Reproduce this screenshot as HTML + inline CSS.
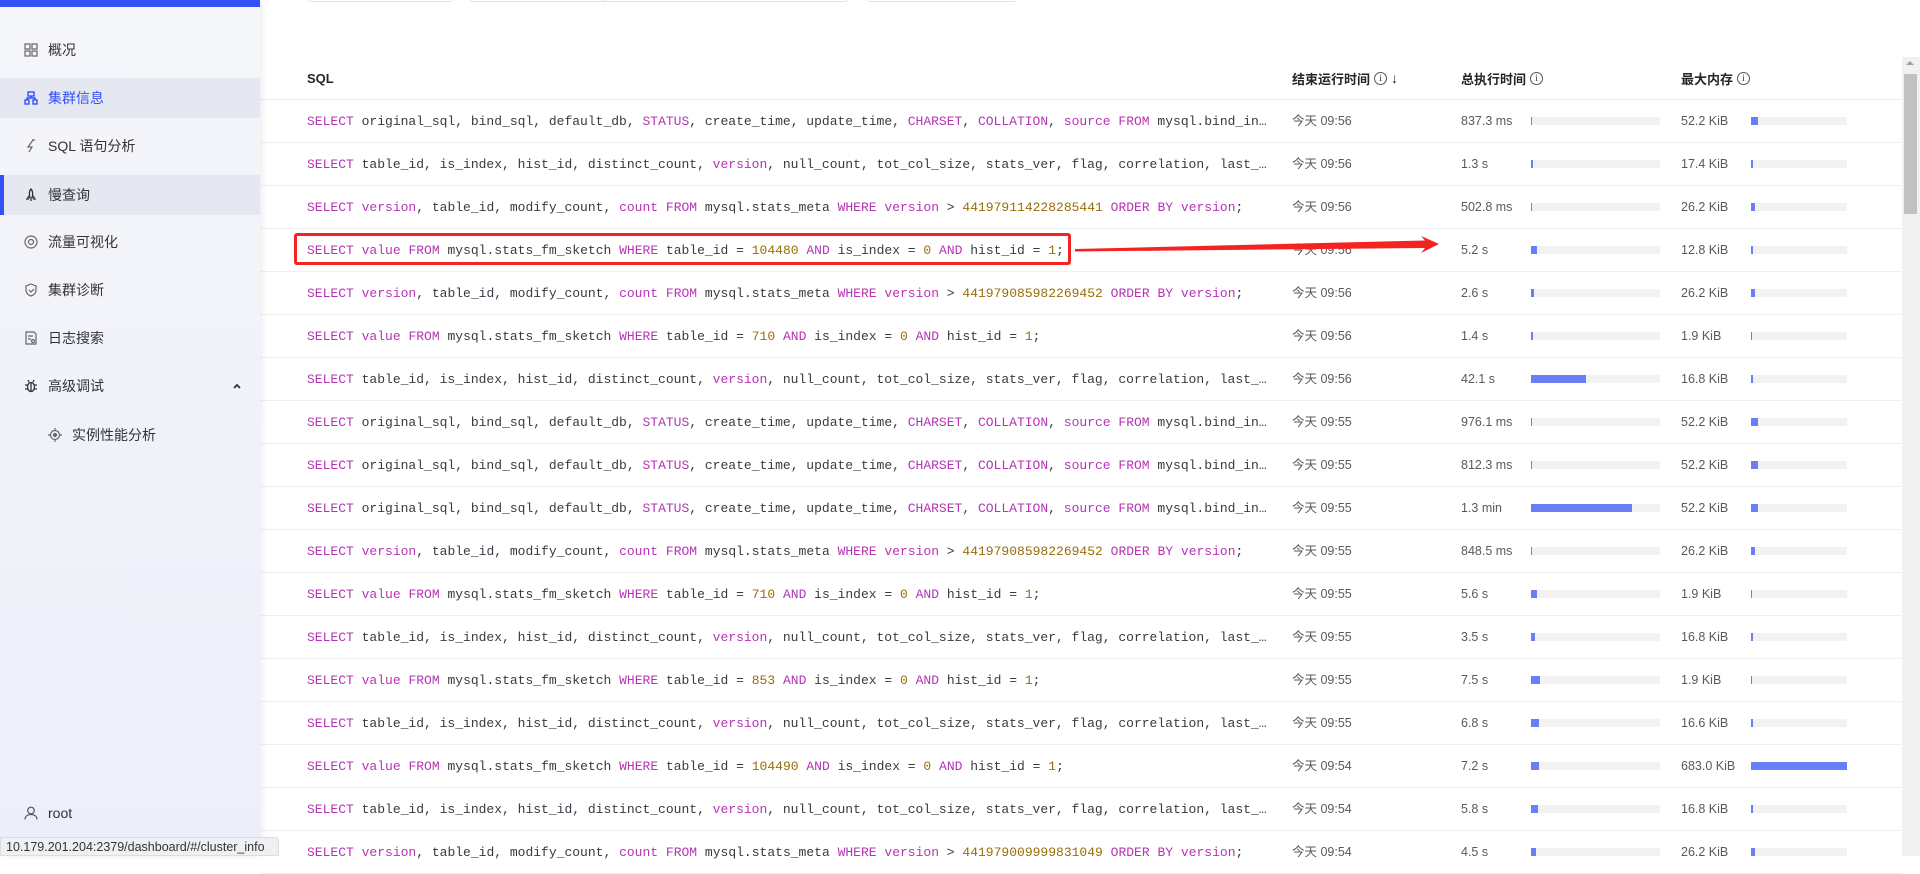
<!DOCTYPE html>
<html><head><meta charset="utf-8">
<style>
*{margin:0;padding:0;box-sizing:border-box}
body{width:1920px;height:856px;overflow:hidden;background:#fff;position:relative;font-family:"Liberation Sans","Noto Sans CJK SC",sans-serif}
#side{position:absolute;left:0;top:0;width:260px;height:856px;background:linear-gradient(#f5f6fa,#eceff9);box-shadow:2px 0 6px rgba(0,0,0,.08);z-index:2}
#side .bar{position:absolute;left:0;top:0;width:260px;height:7px;background:#3451f5}
.mi{position:absolute;left:0;width:260px;height:40px;font-size:14px;color:#333;line-height:40px}
.mi .ic{position:absolute;left:24px;top:13px;width:14px;height:14px}
.mi .t{position:absolute;left:48px}
.sel{background:#e6e8f1}
.act{border-left:4px solid #3451f5}
.blue{color:#3451f5}
#status{position:absolute;left:0;top:837px;width:279px;height:19px;background:#eef0f4;border:1px solid #dcdde2;border-radius:0 4px 0 0;font-size:12.5px;color:#333;line-height:18px;padding-left:5px;z-index:5}
.btn{position:absolute;top:-10px;height:12px;border:1px solid #e2e2e2;border-radius:3px;background:#fff}
.hdr{position:absolute;top:57px;height:43px;left:260px;width:1642px;border-bottom:1px solid #ececec;font-size:13px;font-weight:bold;color:#262626}
.hdr span{position:absolute;top:13px;display:flex;align-items:center;height:16px}
.info{display:inline-block;width:13px;height:13px;border:1px solid #555;border-radius:50%;font-size:9px;line-height:11px;text-align:center;font-weight:normal;font-style:normal;margin-left:4px;font-family:"Liberation Serif",serif}
.row{position:absolute;left:260px;width:1642px;height:43px;border-bottom:1px solid #f0f0f0}
.sql{position:absolute;left:47px;top:14px;width:966px;white-space:nowrap;overflow:hidden;text-overflow:ellipsis;font-family:"Liberation Mono",monospace;font-size:13px;color:#383a42;line-height:15px}
.k{color:#b534b5}.n{color:#9a6d06}
.c{position:absolute;top:14px;font-size:12.5px;color:#595959;line-height:15px}
.tr{position:absolute;top:17px;height:8px;background:#f2f2f2}
.fl{position:absolute;left:0;top:0;height:8px;background:#6a7ff6}
#scroll{position:absolute;left:1902px;top:57px;width:18px;height:799px;background:#f1f1f1}
#thumb{position:absolute;left:1904px;top:74px;width:13px;height:140px;background:#c1c1c1}
</style></head><body>
<div id="side">
<div class="bar"></div>
<div class="mi" style="top:30px"><svg class="ic" viewBox="0 0 14 14" fill="none" stroke="#666" stroke-width="1.2"><rect x="1" y="1" width="5" height="5"/><rect x="8" y="1" width="5" height="5"/><rect x="1" y="8" width="5" height="5"/><rect x="8" y="8" width="5" height="5"/></svg><span class="t">概况</span></div>
<div class="mi sel" style="top:78px"><svg class="ic" viewBox="0 0 14 14" fill="none" stroke="#3451f5" stroke-width="1.4"><rect x="4" y="1" width="6" height="4"/><rect x="1" y="9" width="4" height="4"/><rect x="9" y="9" width="4" height="4"/><path d="M7 5v2M3 9V7h8v2"/></svg><span class="t blue">集群信息</span></div>
<div class="mi" style="top:126px"><svg class="ic" viewBox="0 0 14 14" fill="none" stroke="#666" stroke-width="1.2"><path d="M9 1L4 8h4l-3 5M8 1h3"/></svg><span class="t">SQL 语句分析</span></div>
<div class="mi sel act" style="top:175px"><svg class="ic" style="left:20px" viewBox="0 0 14 14" fill="none" stroke="#333" stroke-width="1.3"><path d="M7 1c2 2 2 6 1 9H6C5 7 5 3 7 1zM5 8l-2 3h2M9 8l2 3H9M7 11v2"/></svg><span class="t" style="left:44px">慢查询</span></div>
<div class="mi" style="top:222px"><svg class="ic" viewBox="0 0 14 14" fill="none" stroke="#666" stroke-width="1.2"><circle cx="7" cy="7" r="6"/><circle cx="7" cy="7" r="2.5"/></svg><span class="t">流量可视化</span></div>
<div class="mi" style="top:270px"><svg class="ic" viewBox="0 0 14 14" fill="none" stroke="#666" stroke-width="1.2"><path d="M7 1l5 2v4c0 3-2 5-5 6-3-1-5-3-5-6V3z"/><path d="M5 7l2 2 3-3"/></svg><span class="t">集群诊断</span></div>
<div class="mi" style="top:318px"><svg class="ic" viewBox="0 0 14 14" fill="none" stroke="#666" stroke-width="1.2"><path d="M2 1h8l2 2v10H2zM4 5h5M4 8h3"/><circle cx="9" cy="10" r="1.5"/></svg><span class="t">日志搜索</span></div>
<div class="mi" style="top:366px"><svg class="ic" viewBox="0 0 14 14" fill="none" stroke="#333" stroke-width="1.3"><ellipse cx="7" cy="8" rx="3.5" ry="4.5"/><path d="M5 3l-1-2M9 3l1-2M1 6h2.5M10.5 6H13M1 10h2.5M10.5 10H13M7 4v8"/></svg><span class="t">高级调试</span><svg style="position:absolute;left:233px;top:17px" width="8" height="6" viewBox="0 0 8 6"><path d="M1 5l3-3 3 3" fill="none" stroke="#333" stroke-width="1.8"/></svg></div>
<div class="mi" style="top:415px"><svg class="ic" style="left:48px" viewBox="0 0 14 14" fill="none" stroke="#666" stroke-width="1.2"><circle cx="7" cy="7" r="4.5"/><circle cx="7" cy="7" r="1.5" fill="#666"/><path d="M7 0v2M7 12v2M0 7h2M12 7h2"/></svg><span class="t" style="left:72px">实例性能分析</span></div>
<div class="mi" style="top:793px"><svg class="ic" viewBox="0 0 14 14" fill="none" stroke="#555" stroke-width="1.2"><circle cx="7" cy="4.5" r="3.3"/><path d="M1 13.5c0-3.5 2.7-5 6-5s6 1.5 6 5"/></svg><span class="t">root</span></div>
</div>
<div id="status">10.179.201.204:2379/dashboard/#/cluster_info</div>

<div class="btn" style="left:308px;width:145px"></div>
<div class="btn" style="left:470px;width:148px"></div>
<div class="btn" style="left:602px;width:246px"></div>
<div class="btn" style="left:867px;width:150px"></div>

<div class="hdr">
<span style="left:47px">SQL</span>
<span style="left:1032px">结束运行时间<i class="info">i</i><b style="font-weight:normal;font-size:14px;margin-left:4px">↓</b></span>
<span style="left:1201px">总执行时间<i class="info">i</i></span>
<span style="left:1421px">最大内存<i class="info">i</i></span>
</div>

<div id="rows"></div>
<div id="scroll"></div><div id="thumb"></div>
<div style="position:absolute;left:1906px;top:61px;width:0;height:0;border-left:4px solid transparent;border-right:4px solid transparent;border-bottom:4px solid #a0a0a0"></div>

<div style="position:absolute;left:294px;top:233px;width:777px;height:32px;border:3px solid #f52222;border-radius:3px;z-index:3"></div>
<svg style="position:absolute;left:0;top:0;z-index:3" width="1920" height="856"><polygon points="1075,249 1075,251.5 1425,248 1421,253 1439,244 1421,236 1425,240.5" fill="#f52222"/></svg>

<script>
var K=function(s){return '<span class="k">'+s+'</span>'},N=function(s){return '<span class="n">'+s+'</span>'};
var A=K('SELECT')+' original_sql, bind_sql, default_db, '+K('STATUS')+', create_time, update_time, '+K('CHARSET')+', '+K('COLLATION')+', '+K('source')+' '+K('FROM')+' mysql.bind_info '+K('WHERE')+' update_time &gt; 0';
var B=K('SELECT')+' table_id, is_index, hist_id, distinct_count, '+K('version')+', null_count, tot_col_size, stats_ver, flag, correlation, last_analyze_pos '+K('FROM')+' mysql.stats_histograms';
function C(n){return K('SELECT')+' '+K('version')+', table_id, modify_count, '+K('count')+' '+K('FROM')+' mysql.stats_meta '+K('WHERE')+' '+K('version')+' &gt; '+N(n)+' '+K('ORDER BY')+' '+K('version')+';'}
function D(n){return K('SELECT')+' '+K('value')+' '+K('FROM')+' mysql.stats_fm_sketch '+K('WHERE')+' table_id = '+N(n)+' '+K('AND')+' is_index = '+N('0')+' '+K('AND')+' hist_id = '+N('1')+';'}
var R=[[A,'09:56','837.3 ms',1,'52.2 KiB',7],[B,'09:56','1.3 s',2,'17.4 KiB',2],[C('441979114228285441'),'09:56','502.8 ms',1,'26.2 KiB',4],[D('104480'),'09:56','5.2 s',6,'12.8 KiB',2],[C('441979085982269452'),'09:56','2.6 s',3,'26.2 KiB',4],[D('710'),'09:56','1.4 s',2,'1.9 KiB',1],[B,'09:56','42.1 s',55,'16.8 KiB',2],[A,'09:55','976.1 ms',1,'52.2 KiB',7],[A,'09:55','812.3 ms',1,'52.2 KiB',7],[A,'09:55','1.3 min',101,'52.2 KiB',7],[C('441979085982269452'),'09:55','848.5 ms',1,'26.2 KiB',4],[D('710'),'09:55','5.6 s',6,'1.9 KiB',1],[B,'09:55','3.5 s',4,'16.8 KiB',2],[D('853'),'09:55','7.5 s',9,'1.9 KiB',1],[B,'09:55','6.8 s',8,'16.6 KiB',2],[D('104490'),'09:54','7.2 s',8,'683.0 KiB',96],[B,'09:54','5.8 s',7,'16.8 KiB',2],[C('441979009999831049'),'09:54','4.5 s',5,'26.2 KiB',4]];
var h='';
R.forEach(function(r,i){var t=100+43*i;
h+='<div class="row" style="top:'+t+'px"><div class="sql">'+r[0]+'</div><div class="c" style="left:1032px">今天 '+r[1]+'</div><div class="c" style="left:1201px">'+r[2]+'</div><div class="tr" style="left:1271px;width:129px"><div class="fl" style="width:'+r[3]+'px"></div></div><div class="c" style="left:1421px">'+r[4]+'</div><div class="tr" style="left:1491px;width:96px"><div class="fl" style="width:'+r[5]+'px"></div></div></div>';});
document.getElementById('rows').innerHTML=h;
</script>
</body></html>
